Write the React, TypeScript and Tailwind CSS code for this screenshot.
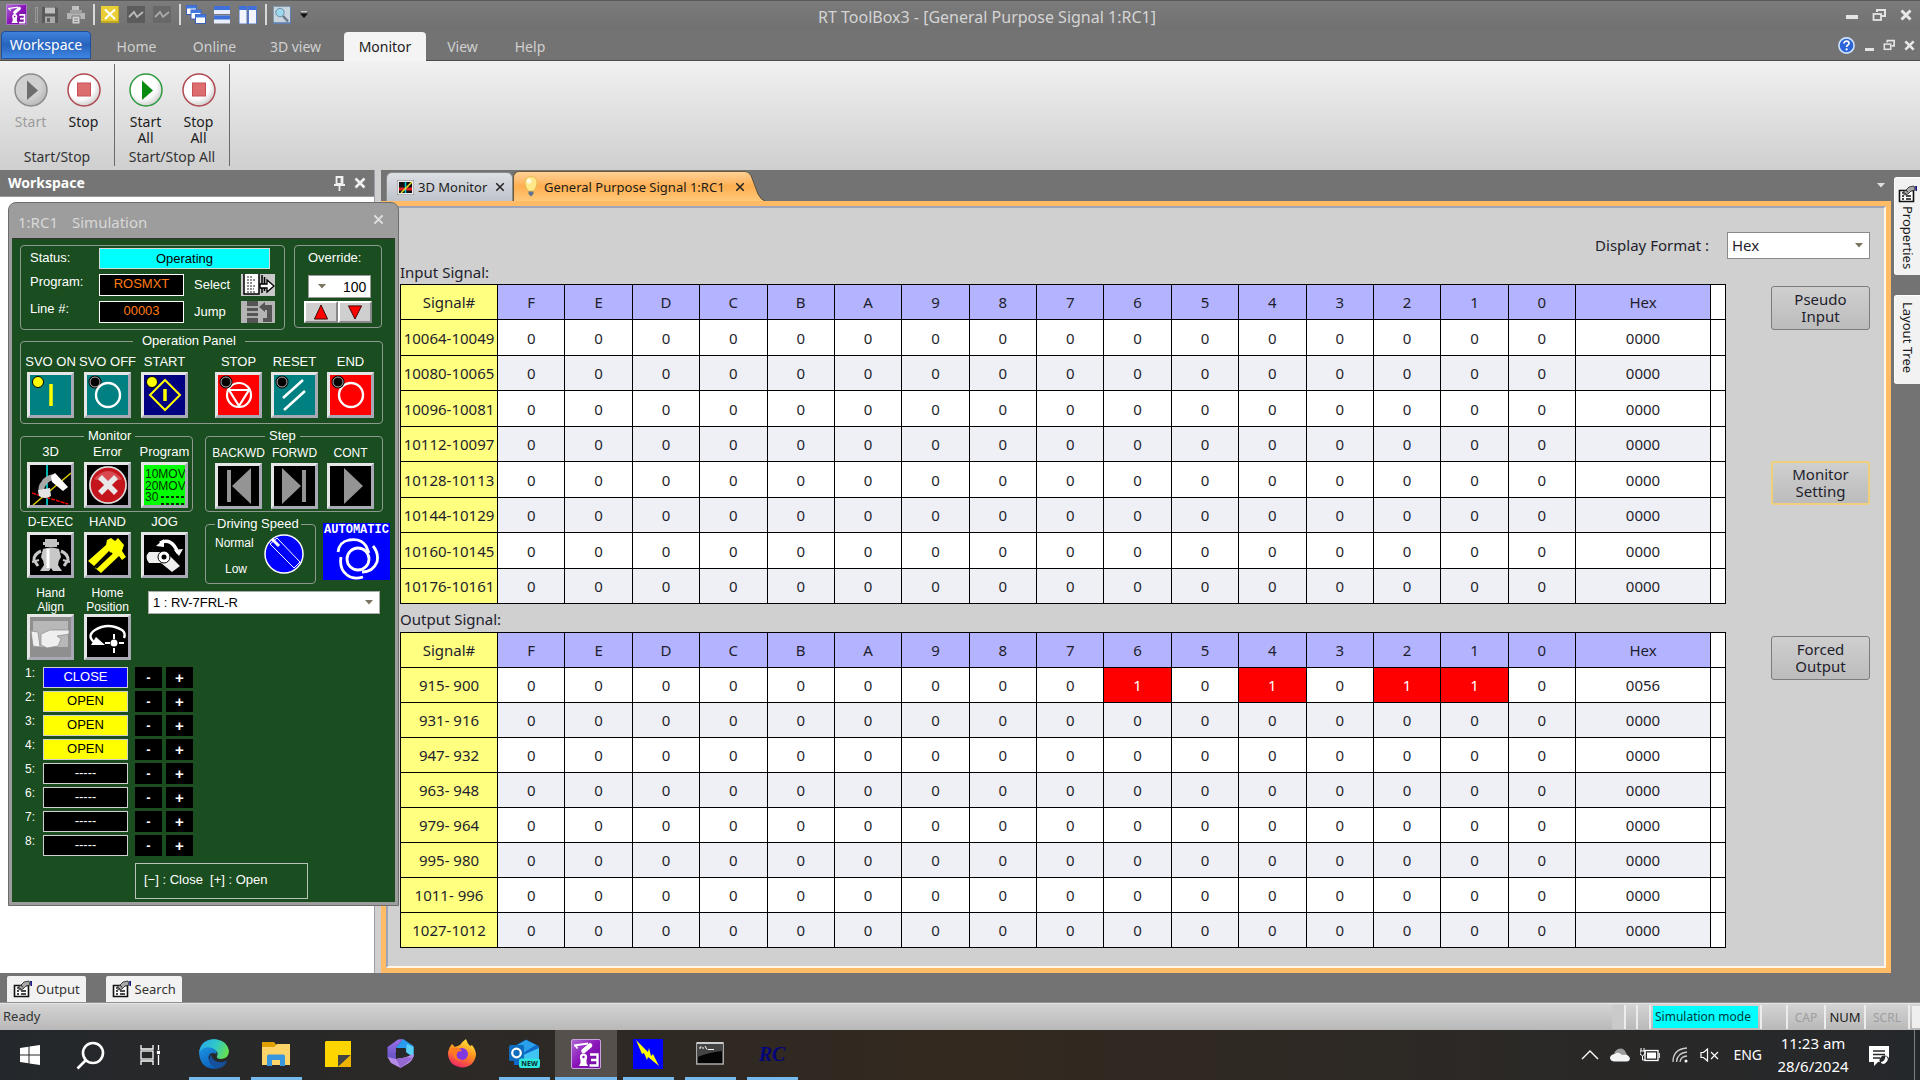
import React from "react";

type Kids = { children?: React.ReactNode };

/* ---------- small glyphs ---------- */

function RobotLogo({ size }: { size: number }) {
  return (
    <svg width={size} height={size} viewBox="0 0 30 30" aria-hidden="true">
      <defs>
        <linearGradient id="rt" x1="0" y1="0" x2="1" y2="1">
          <stop offset="0" stopColor="#b06ad6" />
          <stop offset="0.5" stopColor="#8a14b8" />
          <stop offset="1" stopColor="#6a0a9a" />
        </linearGradient>
      </defs>
      <rect x="0.5" y="0.5" width="29" height="29" rx="1.5" fill="url(#rt)" stroke="#c9a0e0" />
      <path d="M3 6.500 L17 4.500 M4 6 L6.500 9.500" fill="none" stroke="#fff" strokeWidth="1.800" />
      <path d="M12.500 12 L19 6.500" stroke="#fff" strokeWidth="4.600" strokeLinecap="round" />
      <circle cx="12.500" cy="18" r="3.600" fill="#fff" />
      <path d="M9.500 19 H15.500 V24 L17 27 H8 L9.500 24 Z" fill="#fff" />
      <circle cx="12.500" cy="18" r="1.200" fill="#8a14b8" />
      <path d="M19 15.500 H26.500 V26.500 H18.500 M20 21 H26.500" fill="none" stroke="#fff" strokeWidth="2.400" />
    </svg>
  );
}

function CloseX({ size = 12, color = "#e8e8e8", w = 2 }: { size?: number; color?: string; w?: number }) {
  return (
    <svg width={size} height={size} viewBox="0 0 12 12" aria-hidden="true">
      <path d="M1.500 1.500 L10.500 10.500 M10.500 1.500 L1.500 10.500" stroke={color} strokeWidth={w} />
    </svg>
  );
}

function RestoreGlyph({ size = 14 }: { size?: number }) {
  return (
    <svg width={size} height={size} viewBox="0 0 14 14" fill="none" stroke="#e4e4e4" aria-hidden="true">
      <path d="M5 4 V2 H13 V8 H10" strokeWidth="2" />
      <rect x="1.500" y="6" width="7.500" height="6" strokeWidth="1.800" />
    </svg>
  );
}

function PropsIcon() {
  return (
    <svg className="shrink-0" width="20" height="18" viewBox="0 0 20 18" aria-hidden="true">
      <path d="M1.500 5.500 H15.500 V16.500 H1.500 Z" fill="#fff" stroke="#111" strokeWidth="1.600" />
      <path d="M4 11 H6 M8 11 H13 M4 14 H6 M8 14 H13" stroke="#111" strokeWidth="1.500" />
      <path d="M4 8 L8 5 L11 2 L16 1 L17 5 L13 6 L10 9 L7 10 Z" fill="#a8a8a8" stroke="#333" strokeWidth="0.900" />
      <path d="M5 7 L8 9 M8 5 L10 7.500" stroke="#222" />
      <path d="M17 1 H19 V6 H17.500 Z" fill="#1a1a80" />
    </svg>
  );
}

function Caret({ color = "#7a7560" }: { color?: string }) {
  return (
    <svg className="pointer-events-none" width="8" height="5" viewBox="0 0 8 5" aria-hidden="true">
      <path d="M0 0 H8 L4 4.500 Z" fill={color} />
    </svg>
  );
}

/* ---------- title bar ---------- */

function QuickAccess() {
  return (
    <div className="flex items-center w-[310px] pl-[6px] shrink-0">
      <RobotLogo size={21} />
      <div className="ml-2 w-[3px] h-4 border border-[#999]" />
      <button aria-label="Save" className="ml-[3px]">
        <svg width="18" height="18" viewBox="0 0 18 18"><path d="M1 1 H15 L17 3 V17 H1 Z" fill="#5a5a5a" /><rect x="4" y="1.500" width="10" height="6" fill="#bdbdbd" /><rect x="4" y="10.500" width="10" height="6.500" fill="#a8a8a8" /><rect x="6" y="12" width="3" height="4" fill="#606060" /></svg>
      </button>
      <button aria-label="Print" className="ml-[7px]">
        <svg width="20" height="20" viewBox="0 0 20 20"><path d="M6 1 H13 V6 H6 Z" fill="#c0c0c0" /><path d="M1 8 H19 V14 H1 Z" fill="#b4b4b4" /><path d="M4 5 H16 V9 H4 Z" fill="#a0a0a0" /><path d="M6 11 H14 V19 H6 Z" fill="#d0d0d0" stroke="#777" /><path d="M8 14 H12 M8 16.500 H12" stroke="#888" /></svg>
      </button>
      <div className="ml-[7px] w-[2px] h-[21px] bg-[#d8d8d8]" />
      <button aria-label="Disconnect" className="ml-[6px]">
        <svg width="18" height="17" viewBox="0 0 18 17"><rect width="18" height="17" fill="#e9cf35" /><path d="M0 16 H18 V0" fill="none" stroke="#b59c1c" strokeWidth="1.500" /><path d="M4 3.500 L14 13 M14 3.500 L4 13" stroke="#fff" strokeWidth="2" /></svg>
      </button>
      <button aria-label="Trace" className="ml-[8px]">
        <svg width="18" height="17" viewBox="0 0 18 17"><rect width="18" height="17" fill="#5c5c5c" /><path d="M2 11 L7 6 L10 11 L16 6" fill="none" stroke="#bbb" strokeWidth="1.800" /></svg>
      </button>
      <button aria-label="Graph" className="ml-[8px]">
        <svg width="18" height="17" viewBox="0 0 18 17"><rect width="18" height="17" fill="#686868" /><path d="M2 11 L7 6 L10 11 L16 6" fill="none" stroke="#aaa" strokeWidth="1.800" /></svg>
      </button>
      <div className="ml-[8px] w-[2px] h-[21px] bg-[#d8d8d8]" />
      <button aria-label="Cascade" className="ml-[5px]">
        <svg width="20" height="20" viewBox="0 0 20 20">
          {[0, 4.5, 9].map((o) => (
            <g key={o}><rect x={0.5 + o} y={0.5 + o} width="10" height="9" fill="#fff" stroke="#3c62b8" /><rect x={0.5 + o} y={0.5 + o} width="10" height="3" fill="#3f76e0" /></g>
          ))}
        </svg>
      </button>
      <button aria-label="Tile horizontally" className="ml-[8px]">
        <svg width="16" height="18" viewBox="0 0 16 18"><rect width="16" height="8" fill="#e8eefc" /><rect width="16" height="4" fill="#3f6fd8" /><rect y="9.500" width="16" height="8" fill="#e8eefc" /><rect y="9.500" width="16" height="4" fill="#3f6fd8" /></svg>
      </button>
      <button aria-label="Tile vertically" className="ml-[9px]">
        <svg width="18" height="18" viewBox="0 0 18 18"><rect width="8" height="18" fill="#f2f5fd" stroke="#5578c8" /><rect width="8" height="4" fill="#3f6fd8" /><rect x="9.500" width="8" height="18" fill="#f2f5fd" stroke="#5578c8" /><rect x="9.500" width="8" height="4" fill="#3f6fd8" /></svg>
      </button>
      <div className="ml-[8px] w-[2px] h-[21px] bg-[#d8d8d8]" />
      <button aria-label="Find" className="ml-[6px]">
        <svg width="18" height="18" viewBox="0 0 18 18"><rect x="0.500" y="0.500" width="17" height="17" fill="#c8d4de" stroke="#8298ac" /><path d="M0 17 H18 V0" fill="none" stroke="#5a7ab0" strokeWidth="1.500" /><circle cx="7" cy="6.500" r="4.200" fill="#9ed8ec" stroke="#6a8ea8" /><path d="M10 10 L15 15.500" stroke="#6b7a88" strokeWidth="2.600" /></svg>
      </button>
      <button aria-label="Customize toolbar" className="ml-[9px]">
        <svg width="8" height="8" viewBox="0 0 8 8"><path d="M1 0.700 H7" stroke="#ddd" /><path d="M0 2.500 H8 L4 7 Z" fill="#111" /></svg>
      </button>
    </div>
  );
}

function TitleBar() {
  return (
    <header className="flex items-center h-[30px] border-t border-[#5a5a5a] bg-linear-to-b from-[#7b7b7b] to-[#717171] pb-[2px]">
      <QuickAccess />
      <h1 className="flex-1 text-center text-base leading-5 text-[#d4d4d4] whitespace-nowrap pt-1">RT ToolBox3 - [General Purpose Signal 1:RC1]</h1>
      <div className="flex items-center justify-end w-[256px] gap-[14px] pr-2">
        <button aria-label="Minimize" className="pt-1"><div className="w-[12px] h-[4px] bg-[#e4e4e4]" /></button>
        <button aria-label="Restore"><RestoreGlyph /></button>
        <button aria-label="Close"><CloseX w={3} /></button>
      </div>
    </header>
  );
}

function MenuTab({ children, w }: Kids & { w: string }) {
  return <button className={`${w} pt-1 text-[#d0d0d0] text-center`}>{children}</button>;
}

function MenuBar() {
  return (
    <nav className="flex h-[31px] bg-[#737373] border-b border-[#4c4c4c] text-sm leading-5">
      <button className="w-[90px] ml-px mt-px mb-px rounded-t border border-[#1c4fa0] bg-linear-to-b from-[#3f82dc] via-[#2763bd] to-[#3f86e2] text-white">Workspace</button>
      <MenuTab w="w-[91px]">Home</MenuTab>
      <MenuTab w="w-[65px]">Online</MenuTab>
      <MenuTab w="w-[97px]">3D view</MenuTab>
      <button className="w-[82px] mt-[2px] -mb-px pt-px rounded-t bg-[#f4f4f4] text-[#1c1c1c]">Monitor</button>
      <MenuTab w="w-[73px]">View</MenuTab>
      <MenuTab w="w-[62px]">Help</MenuTab>
      <div className="flex flex-1 items-center justify-end gap-[9px] pr-[5px]">
        <button aria-label="Help topics" className="mr-px">
          <svg width="17" height="17" viewBox="0 0 17 17"><circle cx="8.500" cy="8.500" r="7.600" fill="#2a62d8" stroke="#cfe2ff" strokeWidth="1.600" /><path d="M6 6.500 Q6 4.200 8.500 4.200 Q11 4.200 11 6.300 Q11 7.600 9.600 8.300 Q8.600 8.900 8.600 10" fill="none" stroke="#fff" strokeWidth="1.700" /><circle cx="8.600" cy="12.400" r="1.100" fill="#fff" /></svg>
        </button>
        <button aria-label="Minimize document" className="pt-2"><div className="w-[9px] h-[3px] bg-[#e4e4e4]" /></button>
        <button aria-label="Restore document"><RestoreGlyph size={12} /></button>
        <button aria-label="Close document"><CloseX size={11} w={2.8} /></button>
      </div>
    </nav>
  );
}

/* ---------- ribbon ---------- */

function RoundIcon({ kind }: { kind: "off" | "play" | "stop" }) {
  const ring = kind === "off" ? "#8a8a8a" : kind === "play" ? "#2f9a3f" : "#b04850";
  return (
    <svg width="34" height="34" viewBox="0 0 34 34" aria-hidden="true">
      <defs>
        <radialGradient id={"ball" + kind} cx="0.4" cy="0.35" r="0.7">
          <stop offset="0.6" stopColor={kind === "off" ? "#d0d0d0" : "#ffffff"} />
          <stop offset="1" stopColor={kind === "off" ? "#b4b4b4" : "#c8c8c8"} />
        </radialGradient>
      </defs>
      <circle cx="17" cy="17" r="16" fill={`url(#ball${kind})`} stroke={ring} strokeWidth="1.500" />
      {kind === "stop" ? (
        <rect x="10.500" y="10" width="13" height="13" fill="#dc6e70" stroke="#c65056" />
      ) : (
        <path d="M13 7.500 L24 17.500 L13 27 Z" fill={kind === "off" ? "#6e6e6e" : "#0b8a10"} />
      )}
    </svg>
  );
}

function RibbonButton({ kind, lines, muted }: { kind: "off" | "play" | "stop"; lines: string[]; muted?: boolean }) {
  return (
    <button disabled={muted} className="flex flex-col items-center w-[53px]">
      <RoundIcon kind={kind} />
      <span className={`mt-[7px] leading-4 ${muted ? "text-[#9c9c9c]" : "text-[#1c1c1c]"}`}>
        {lines.map((l) => <span key={l} className="block">{l}</span>)}
      </span>
    </button>
  );
}

function RibbonGroup({ label, children }: Kids & { label: string }) {
  return (
    <section className="flex flex-col justify-between w-[115px] mt-[3px] mb-[4px] border-r border-[#6a6a6a] pt-[9px]">
      <div className="flex px-1">{children}</div>
      <h2 className="text-center leading-[18px] text-[#333]">{label}</h2>
    </section>
  );
}

function Ribbon() {
  return (
    <div className="flex h-[109px] bg-linear-to-b from-[#f1f1f1] to-[#cfcfcf] text-sm">
      <RibbonGroup label="Start/Stop">
        <RibbonButton kind="off" lines={["Start"]} muted />
        <RibbonButton kind="stop" lines={["Stop"]} />
      </RibbonGroup>
      <RibbonGroup label="Start/Stop All">
        <RibbonButton kind="play" lines={["Start", "All"]} />
        <RibbonButton kind="stop" lines={["Stop", "All"]} />
      </RibbonGroup>
    </div>
  );
}

/* ---------- simulation window ---------- */

function Led({ on }: { on?: boolean }) {
  return on ? (
    <circle cx="8" cy="7" r="5.500" fill="#ffff00" stroke="#000" />
  ) : (
    <g><circle cx="8" cy="7" r="6.500" fill="#000" /><circle cx="8" cy="7" r="5" fill="#000" stroke="#b0b0b0" /></g>
  );
}

function PanelButton({ label, bg, small, children }: Kids & { label: string | string[]; bg: string; small?: boolean }) {
  const lines = Array.isArray(label) ? label : [label];
  const stacked = lines.length > 1;
  return (
    <label className="flex flex-col items-center w-[47px]">
      <span className={`whitespace-nowrap text-center ${small ? "text-xs" : "text-[13px]"} ${stacked ? "leading-[14px]" : "leading-4"}`}>
        {lines.map((l) => <span key={l} className="block">{l}</span>)}
      </span>
      <button aria-label={lines.join(" ")} className={`${stacked ? "" : "mt-[2px]"} w-[47px] h-[46px] border-[3px] border-t-[#e6e6e6] border-l-[#e6e6e6] border-r-[#a9a9b6] border-b-[#a9a9b6] ${bg}`}>
        <svg width="41" height="40" viewBox="0 0 41 40">{children}</svg>
      </button>
    </label>
  );
}

function Group({ title, className, at, children }: Kids & { title: string; className: string; at: string }) {
  return (
    <fieldset className={`rounded-[4px] border border-[#8f9a8f] min-w-0 ${className}`}>
      <legend className={`text-[13px] leading-[14px] whitespace-nowrap ${at}`}>{title}</legend>
      {children}
    </fieldset>
  );
}

function StatusBlock() {
  return (
    <div className="flex items-start gap-[9px]">
      <div className="w-[265px] h-[85px] rounded-[4px] border border-[#8f9a8f] pl-[9px] pt-[2px] flex flex-col gap-[5px]">
        <div className="flex">
          <span className="w-[69px] leading-[20px]">Status:</span>
          <output className="w-[171px] h-[21px] border border-[#d8d8d8] bg-[#00ffff] text-black text-center leading-[19px]">Operating</output>
        </div>
        <div className="flex">
          <span className="w-[69px] leading-4">Program:</span>
          <output className="w-[85px] h-[22px] border border-white bg-black text-[#ff7a10] text-center leading-[18px]">ROSMXT</output>
          <span className="w-[47px] ml-[10px] leading-[22px]">Select</span>
          <button aria-label="Select program" className="w-[34px] h-[22px] bg-[#c8c8c8]">
            <svg width="34" height="22" viewBox="0 0 34 22"><path d="M3 0 V20 H18 V0" fill="#fff" stroke="#000" strokeWidth="1.500" /><path d="M6 3 H12 M6 6 H15 M6 9 H12 M6 12 H15 M6 15 H13 M6 18 H15" stroke="#222" strokeDasharray="2 1" /><path d="M21 1 V19 M23.500 3 V17" stroke="#000" strokeWidth="1.500" /><path d="M19 10 H26 V6 L33 12 L26 18 V14 H19 Z" fill="#fff" stroke="#000" strokeWidth="1.300" /></svg>
          </button>
        </div>
        <div className="flex">
          <span className="w-[69px] leading-4">Line #:</span>
          <output className="w-[85px] h-[22px] border border-white bg-black text-[#ff7a10] text-center leading-[18px]">00003</output>
          <span className="w-[47px] ml-[10px] leading-[22px]">Jump</span>
          <button aria-label="Jump to line" className="w-[34px] h-[22px] bg-[#b4b4b4]">
            <svg width="34" height="22" viewBox="0 0 34 22"><path d="M6 0 H17 V22 H6 Z" fill="#555" /><path d="M6 6 H17 M6 11 H17 M6 16 H17" stroke="#c8c8c8" strokeWidth="1.500" /><path d="M18 6 L24 1 V4 H31 V21 H22 V17 H26 V9 H24 V11 Z" fill="#555" /></svg>
          </button>
        </div>
      </div>
      <div className="w-[88px] h-[83px] rounded-[4px] border border-[#8f9a8f] px-[9px] pt-1">
        <label htmlFor="override" className="block ml-1 -mr-2 leading-[16px]">Override:</label>
        <div className="mt-[9px] ml-1 flex items-center bg-white border border-[#9a9a9a] h-[23px] w-[63px] pl-[9px]">
          <Caret />
          <select id="override" className="appearance-none flex-1 min-w-0 pl-[17px] text-black text-sm leading-4 outline-none"><option>100</option></select>
        </div>
        <div className="flex mt-[3px] -mr-1">
          {["M16 3 L23 18 H9 Z", "M16 18 L23 4 H9 Z"].map((d, i) => (
            <button key={d} aria-label={i ? "Decrease override" : "Increase override"} className="w-[34px] h-[22px] bg-[#cfcfcf] border-2 border-t-white border-l-white border-r-[#888] border-b-[#888]">
              <svg className="-mt-px" width="30" height="20" viewBox="0 0 32 21"><path d={d} fill="#f00" stroke="#300" /></svg>
            </button>
          ))}
        </div>
      </div>
    </div>
  );
}

const hands = [
  ["CLOSE", "bg-[#0000ff] text-white"],
  ["OPEN", "bg-[#ffff00] text-black"],
  ["OPEN", "bg-[#ffff00] text-black"],
  ["OPEN", "bg-[#ffff00] text-black"],
  ["-----", "bg-black text-white"],
  ["-----", "bg-black text-white"],
  ["-----", "bg-black text-white"],
  ["-----", "bg-black text-white"],
];

function SimulationWindow() {
  return (
    <section className="absolute left-2 top-8 z-10 w-[391px] rounded-t-[8px] border border-[#6c6c6c] bg-[#9d9d9d] px-[3px] pb-[3px] font-['Liberation_Sans',sans-serif] text-[13px] text-white">
      <div className="flex items-start justify-between h-[35px] pl-[6px] pr-[11px] font-['Noto_Sans',sans-serif]">
        <h2 className="flex gap-[14px] pt-[9px] text-[15px] leading-5 text-[#d8d8d8]"><span>1:RC1</span><span>Simulation</span></h2>
        <button aria-label="Close simulation" className="pt-[11px]"><CloseX color="#e0e0e0" size={11} w={2.2} /></button>
      </div>
      <div className="bg-[#1a4d20] border-t border-[#333] pl-2 pt-[6px] pb-[3px]">
        <StatusBlock />
        <Group title="Operation Panel" at="ml-[106px] px-[9px]" className="mt-1 w-[363px] h-[90px] pl-[6px] pr-[8px]">
          <div className="flex justify-between pt-[6px]">
            <div className="flex gap-[10px]">
              <PanelButton label="SVO ON" bg="bg-[#008080]"><Led on /><path d="M21 9 V31" stroke="#ff0" strokeWidth="3.500" /></PanelButton>
              <PanelButton label="SVO OFF" bg="bg-[#008080]"><Led /><circle cx="21" cy="20" r="12" fill="none" stroke="#fff" strokeWidth="2.400" /></PanelButton>
              <PanelButton label="START" bg="bg-[#000080]"><path d="M21 5 L36 20 L21 35 L6 20 Z" fill="none" stroke="#ff0" strokeWidth="2" /><path d="M21 14 V26" stroke="#ff0" strokeWidth="3.500" /><Led on /></PanelButton>
            </div>
            <div className="flex gap-[9px]">
              <PanelButton label="STOP" bg="bg-[#ff0000]"><circle cx="21" cy="20" r="12" fill="none" stroke="#fff" strokeWidth="2.200" /><path d="M11 15 H31 L21 31 Z" fill="none" stroke="#fff" strokeWidth="2.200" /><Led /></PanelButton>
              <PanelButton label="RESET" bg="bg-[#008080]"><Led /><path d="M9 23 L29 5 M10 35 L31 16" stroke="#fff" strokeWidth="2.600" /></PanelButton>
              <PanelButton label="END" bg="bg-[#ff0000]"><circle cx="21" cy="20" r="12" fill="none" stroke="#fff" strokeWidth="2.400" /><Led /></PanelButton>
            </div>
          </div>
        </Group>
        <div className="flex gap-3 mt-[5px]">
          <Group title="Monitor" at="ml-[57px] px-1" className="w-[173px] h-[83px] px-[6px] pt-px">
            <div className="flex gap-[10px]">
              <PanelButton label="3D" bg="bg-black">
                <path d="M17 0 V40" stroke="#00b4b4" strokeWidth="2" /><path d="M2 28 L38 39" stroke="#e00" strokeWidth="1.500" strokeDasharray="4 1" /><path d="M3 40 L41 8" stroke="#d8c800" strokeWidth="1.500" />
                <path d="M12 30 Q10 22 14 18 Q17 13 24 12" fill="none" stroke="#a8a8a8" strokeWidth="6" /><path d="M21 11 L25 8 L38 22 L33 26 L22 17 Z" fill="#fff" /><path d="M8 25 L20 23 L21 31 Q15 35 9 31 Z" fill="#e4e4e4" />
              </PanelButton>
              <PanelButton label="Error" bg="bg-black">
                <circle cx="21" cy="20" r="19" fill="#777" /><circle cx="21" cy="20" r="18" fill="#c4141c" stroke="#ddd" strokeWidth="1.500" /><path d="M7 14 Q21 -2 35 14 Q21 20 7 14 Z" fill="#d84a50" /><path d="M13 12 L29 28 M29 12 L13 28" stroke="#e8e8e8" strokeWidth="5.500" />
              </PanelButton>
              <PanelButton label="Program" bg="bg-[#00ff00]">
                <text x="1" y="13" fontSize="12" fill="#003000">10MOV</text><text x="1" y="25" fontSize="12" fill="#003000">20MOV</text><text x="1" y="36" fontSize="12" fill="#003000">30</text><path d="M17 32 H40 M17 39 H40" stroke="#003000" strokeWidth="2" strokeDasharray="3 2" />
              </PanelButton>
            </div>
          </Group>
          <Group title="Step" at="ml-[50px] px-1" className="w-[178px] h-[83px] pl-[9px] pt-[2px]">
            <div className="flex gap-[9px]">
              <PanelButton small label="BACKWD" bg="bg-black"><path d="M9 4 H13 V36 H9 Z M33 2 V38 L14 20 Z" fill="#949494" /></PanelButton>
              <PanelButton small label="FORWD" bg="bg-black"><path d="M8 2 L27 20 L8 38 Z M28 4 H32 V36 H28 Z" fill="#949494" /></PanelButton>
              <PanelButton small label="CONT" bg="bg-black"><path d="M14 2 L33 20 L14 38 Z" fill="#949494" /></PanelButton>
            </div>
          </Group>
        </div>
        <div className="flex h-[69px] mt-[2px]">
          <div className="flex gap-[10px] pl-[7px] w-[185px]">
            <PanelButton small label="D-EXEC" bg="bg-black">
              <path d="M15 4 H27 V7 H29 V10 H27 V12 H15 V10 H13 V7 H15 Z" fill="#c4c4c4" /><path d="M13 14 Q21 11 29 14 L31 22 Q28 26 28 30 L32 36 H23 L21 33 L19 36 H10 L14 30 Q14 26 11 22 Z" fill="#c8c8c8" /><path d="M11 16 Q4 19 4 25 L8 31 M31 16 Q38 19 38 25 L34 31" fill="none" stroke="#c8c8c8" strokeWidth="3" /><path d="M2 27 L9 25 M40 27 L33 25" stroke="#c8c8c8" strokeWidth="2" /><path d="M18 14 V33" stroke="#fff" strokeWidth="3" />
            </PanelButton>
            <PanelButton label="HAND" bg="bg-black">
              <path d="M20 5 L24 3 L28 6 L31 3 L37 10 L35 16 L39 22 L35 25 L32 21 L14 38 L8 33 L24 18 L22 16 L7 31 L1 26 L19 10 Z" fill="#ff0" /><path d="M9 33 L25 18" stroke="#000" strokeWidth="2" />
            </PanelButton>
            <PanelButton label="JOG" bg="bg-black">
              <path d="M5 17 H22 L36 31 L28 37 L17 28 H5 Q0 22 5 17 Z" fill="#eee" /><circle cx="20" cy="22" r="6" fill="#fff" stroke="#000" /><circle cx="20" cy="22" r="2.500" /><path d="M16 8 Q28 2 34 18" fill="none" stroke="#fff" strokeWidth="3.500" /><path d="M12 11 L20 4 L20 12 Z M30 15 L39 14 L35 21 Z" fill="#fff" />
            </PanelButton>
          </div>
          <Group title="Driving Speed" at="px-[2px]" className="mt-[3px] w-[111px] h-[67px] pl-[9px] pr-[11px]">
            <div className="flex justify-between">
              <div className="flex flex-col text-xs">
                <span className="pt-1 leading-4">Normal</span>
                <span className="pl-[10px] pt-[10px] leading-4">Low</span>
              </div>
              <button aria-label="Driving speed">
                <svg width="40" height="40" viewBox="0 0 40 40"><circle cx="20" cy="20" r="19" fill="#0000ff" stroke="#fff" strokeWidth="1.500" /><path d="M6 10 L13 4 L36 28 L30 34 Z" fill="none" stroke="#fff" /><path d="M8 5 L15 12" stroke="#fff" strokeWidth="3" /></svg>
              </button>
            </div>
          </Group>
          <div className="ml-[7px] mt-[9px] w-[67px] h-[57px] bg-[#0000ff] flex flex-col items-center">
            <span className="font-['Liberation_Mono',monospace] font-bold text-xs leading-[14px]">AUTOMATIC</span>
            <svg width="46" height="43" viewBox="0 0 46 43" fill="none" stroke="#fff" strokeWidth="2.800" aria-label="Automatic mode"><circle cx="24" cy="22" r="11" /><path d="M4 15 Q5 5 15 3 Q27 1 32 9 L35 16" /><path d="M39 9 Q45 16 43 25 Q39 35 28 35" /><path d="M7 20 Q5 32 13 38 Q19 43 29 40" /></svg>
          </div>
        </div>
        <div className="flex mt-[3px]">
          <div className="flex gap-[10px] pl-[7px] w-[128px]">
            <PanelButton small label={["Hand", "Align"]} bg="bg-[#8f8f8f]">
              <path d="M3 4 H38 V30 H3 Z" fill="#b8b8b8" /><path d="M1 14 L8 15 L10 30 L3 29 Z M11 17 L20 13 L39 13 L39 17 L27 19 L31 22 L28 29 L17 31 L11 28 Z" fill="#efefef" stroke="#8a8a8a" strokeWidth="0.700" />
            </PanelButton>
            <PanelButton small label={["Home", "Position"]} bg="bg-black">
              <path d="M8 26 Q-1 19 8 13 Q21 5 35 13 Q39 16 37 21" fill="none" stroke="#fff" strokeWidth="2.400" /><path d="M9 20 L18 28 H4 Z" fill="#fff" /><path d="M18 26 H38 M27 17 V36" stroke="#fff" strokeWidth="2" strokeDasharray="5 2" /><circle cx="27" cy="26" r="3.500" fill="#fff" />
            </PanelButton>
          </div>
          <div className="relative flex items-center mt-[5px] w-[232px] h-[23px] bg-white border border-[#aaa]">
            <select aria-label="Robot" className="appearance-none w-full h-full pl-1 text-black text-[13px] leading-4 outline-none"><option>1 : RV-7FRL-R</option></select>
            <span className="pointer-events-none absolute right-[6px] flex"><Caret /></span>
          </div>
        </div>
        <ol className="mt-[7px] pl-[5px]">
          {hands.map(([state, tone], i) => (
            <li key={i} className="flex h-6 items-start">
              <span className="w-[18px] text-xs leading-3">{i + 1}:</span>
              <output className={`w-[85px] h-[21px] border border-[#d0d0d0] text-center leading-[18px] ${tone}`}>{state}</output>
              <button aria-label={`Close hand ${i + 1}`} className="ml-[7px] w-[27px] h-[21px] bg-black font-bold leading-[21px]">-</button>
              <button aria-label={`Open hand ${i + 1}`} className="ml-1 w-[27px] h-[21px] bg-black font-bold text-[15px] leading-[21px]">+</button>
            </li>
          ))}
        </ol>
        <p className="ml-[115px] mt-1 w-[173px] h-[36px] border border-[#b8c4b8] pl-2 text-[13px] leading-[32px] whitespace-pre">[−] : Close  [+] : Open</p>
      </div>
    </section>
  );
}

/* ---------- signal tables ---------- */

const bits = ["F", "E", "D", "C", "B", "A", "9", "8", "7", "6", "5", "4", "3", "2", "1", "0"];
const inputs = ["10064-10049", "10080-10065", "10096-10081", "10112-10097", "10128-10113", "10144-10129", "10160-10145", "10176-10161"].map((name) => ({ name, value: 0 }));
const outputs = ["915- 900", "931- 916", "947- 932", "963- 948", "979- 964", "995- 980", "1011- 996", "1027-1012"].map((name, i) => ({ name, value: i === 0 ? 0x56 : 0 }));

function SignalTable({ caption, rows, tall }: { caption: string; rows: { name: string; value: number }[]; tall?: boolean }) {
  return (
    <div className="flex-1 min-w-0">
      <table aria-label={caption} className="w-full table-fixed border-collapse text-center leading-5">
        <colgroup>
          <col className="w-[97px]" />
          {bits.map((b) => <col key={b} />)}
          <col className="w-[135px]" />
          <col className="w-[15px]" />
        </colgroup>
        <thead>
          <tr className="h-[35px] bg-[#b3b3ff]">
            <th className="border border-black bg-[#ffff80] font-normal">Signal#</th>
            {bits.map((b) => <th key={b} className="border border-black font-normal">{b}</th>)}
            <th className="border border-black font-normal">Hex</th>
            <td className="border border-black bg-white" />
          </tr>
        </thead>
        <tbody>
          {rows.map((r, i) => (
            <tr key={r.name} className={`${tall && i % 2 === 0 ? "h-[36px]" : "h-[35px]"} ${i % 2 ? "bg-[#eff0f6]" : "bg-white"}`}>
              <th className="border border-black bg-[#ffff80] font-normal whitespace-nowrap">{r.name}</th>
              {bits.map((b, k) => {
                const on = (r.value >> (15 - k)) & 1;
                return <td key={b} className={`border border-black ${on ? "bg-[#ff0000] text-white" : ""}`}>{on}</td>;
              })}
              <td className="border border-black">{r.value.toString(16).toUpperCase().padStart(4, "0")}</td>
              <td className="border border-black bg-white" />
            </tr>
          ))}
        </tbody>
      </table>
    </div>
  );
}

function SideButton({ lines, focus }: { lines: string[]; focus?: boolean }) {
  return (
    <button className={`w-[99px] h-[44px] rounded-[3px] bg-linear-to-b from-[#cfcfcf] to-[#bcbcbc] leading-[17px] pb-px ${focus ? "border-2 border-[#f0cf7a]" : "border border-[#7c7c7c]"}`}>
      {lines.map((l) => <span key={l} className="block">{l}</span>)}
    </button>
  );
}

function Document() {
  return (
    <main className="flex-1 border-[5px] border-[#ffbb66] bg-[#d0d0d0] text-[15px] text-[#1e1e2c]">
      <div className="h-full border-t-2 border-l-2 border-t-[#a0a4b8] border-l-[#a0a4b8] border-r-2 border-b-2 border-r-[#fff6e6] border-b-[#fff6e6] pl-[12px] pr-[14px] pt-6">
        <div className="flex items-center justify-end gap-[18px]">
          <label htmlFor="format">Display Format :</label>
          <div className="relative flex items-center w-[143px] h-[27px] bg-white border border-[#8a8a8a]">
            <select id="format" className="appearance-none w-full h-full pl-1 outline-none"><option>Hex</option></select>
            <span className="pointer-events-none absolute right-[6px] flex"><Caret /></span>
          </div>
        </div>
        <h2 className="mt-[3px] mb-px leading-[21px]">Input Signal:</h2>
        <div className="flex items-start gap-[45px]">
          <SignalTable caption="Input signals" rows={inputs} tall />
          <div className="flex flex-col gap-[131px] pt-[2px]">
            <SideButton lines={["Pseudo", "Input"]} />
            <SideButton lines={["Monitor", "Setting"]} focus />
          </div>
        </div>
        <h2 className="pt-[3px] pb-px leading-6">Output Signal:</h2>
        <div className="flex items-start gap-[45px]">
          <SignalTable caption="Output signals" rows={outputs} />
          <div className="pt-1"><SideButton lines={["Forced", "Output"]} /></div>
        </div>
      </div>
    </main>
  );
}

function DocumentTabs() {
  return (
    <div className="flex items-end h-[31px] bg-[#737373] pl-[5px] text-[13px] leading-5 text-[#1c1c1c]">
      <div className="flex items-center h-[29px] w-[127px] rounded-t-[6px] border border-b-0 border-[#8a8a8a] bg-linear-to-b from-[#dcdfe4] to-[#bfc3cb] pl-[10px]">
        <svg width="17" height="15" viewBox="0 0 17 15" aria-hidden="true"><rect width="17" height="15" rx="1" fill="#eee" stroke="#777" /><rect x="2" y="2" width="13" height="11" fill="#111" /><path d="M2 9 H15" stroke="#e02020" strokeWidth="3" /><path d="M8.500 2 V13" stroke="#00c8d8" strokeWidth="1.500" /><path d="M4 13 L15 2" stroke="#e8e020" strokeWidth="1.400" /></svg>
        <button className="ml-[4px] whitespace-nowrap">3D Monitor</button>
        <button aria-label="Close 3D Monitor" className="ml-auto mr-[7px]"><CloseX size={10} color="#222" w={1.8} /></button>
      </div>
      <div className="flex items-center h-[30px] w-[232px] rounded-tl-[6px] border-l border-t border-[#6a5a40] bg-linear-to-b from-[#ffd096] via-[#ffaf50] to-[#ffc878] pl-[10px]">
        <svg width="14" height="21" viewBox="0 0 14 21" aria-hidden="true"><path d="M7 0.500 Q13 1 13 7 Q13 10 10 15 H4 Q1 10 1 7 Q1 1 7 0.500 Z" fill="#ffe88a" stroke="#d8b040" strokeWidth="0.700" /><circle cx="5" cy="5" r="2.500" fill="#fffbe0" /><path d="M4.500 15.500 H9.500 V18 L7 20.500 L4.500 18 Z" fill="#5f7390" /></svg>
        <button className="ml-[6px] whitespace-nowrap">General Purpose Signal 1:RC1</button>
        <button aria-label="Close General Purpose Signal" className="ml-auto"><CloseX size={10} color="#222" w={1.8} /></button>
      </div>
      <svg width="20" height="30" viewBox="0 0 20 30" aria-hidden="true">
        <defs><linearGradient id="tabEnd" x1="0" y1="0" x2="0" y2="1"><stop offset="0" stopColor="#ffd096" /><stop offset="0.5" stopColor="#ffaf50" /><stop offset="1" stopColor="#ffc878" /></linearGradient></defs>
        <path d="M0 0 Q5 1 7 7 L13 23 Q16 29 20 30 H0 Z" fill="url(#tabEnd)" /><path d="M0 0.500 Q5 1 7 7 L13 23 Q16 29 20 30" fill="none" stroke="#55503f" />
      </svg>
      <button aria-label="Tab list" className="ml-auto mr-[6px] mb-[13px]"><Caret color="#e0e0e0" /></button>
    </div>
  );
}

function SideRail() {
  return (
    <aside className="w-[29px] shrink-0 bg-[#737373] pt-[7px] pl-[3px] flex flex-col gap-5 items-stretch text-[13px] leading-5 text-[#1c1c1c]">
      <button className="flex flex-col items-center gap-[3px] h-[98px] bg-[#f2f2f2] border-t border-l border-white rounded-l-[3px] pt-[7px]">
        <PropsIcon />
        <span className="[writing-mode:vertical-rl]">Properties</span>
      </button>
      <button className="flex flex-col items-center h-[89px] bg-[#f2f2f2] border-t border-l border-white rounded-l-[3px] pt-[6px]">
        <span className="[writing-mode:vertical-rl] whitespace-nowrap">Layout Tree</span>
      </button>
    </aside>
  );
}

function WorkspacePane() {
  return (
    <aside className="flex flex-col w-[375px] shrink-0 border-r border-[#9ca0a8] bg-white">
      <div className="flex items-center h-[27px] bg-[#757575] border-b border-[#9a9a9a] pl-2 pr-[8px] text-white">
        <h2 className="flex-1 text-sm leading-5 font-bold">Workspace</h2>
        <button aria-label="Pin"><svg width="11" height="15" viewBox="0 0 11 15"><path d="M2.500 1 H8.500 V8 H2.500 Z M0 9 H11 M5.500 9 V15" fill="none" stroke="#f0f0f0" strokeWidth="1.800" /><path d="M7.500 1 V8" stroke="#f0f0f0" strokeWidth="1.800" /></svg></button>
        <button aria-label="Close workspace" className="ml-[9px]"><CloseX color="#f0f0f0" w={2.6} /></button>
      </div>
    </aside>
  );
}

/* ---------- bottom bars ---------- */

function DockTabs() {
  return (
    <div className="flex items-end h-[30px] bg-[#737373] pl-[7px] gap-5 text-[13px] leading-5 border-b border-[#909090]">
      {["Output", "Search"].map((t) => (
        <button key={t} className="flex items-center gap-[3px] h-[26px] px-[6px] rounded-t-[2px] bg-[#f2f2f2] text-[#333]">
          <PropsIcon />{t}
        </button>
      ))}
    </div>
  );
}

function StatusBar() {
  return (
    <footer className="flex items-stretch h-[27px] border-t border-[#e4e4e4] bg-linear-to-b from-[#d4d4d4] to-[#b8b8b8] text-xs leading-[25px] text-[#333]">
      <span className="flex-1 pl-[3px] text-[13px]">Ready</span>
      <div className="w-[14px] my-px bg-[#cacaca] border-r-2 border-[#ececec]" />
      <div className="w-[12px] my-px border-r-2 border-[#ececec]" />
      <div className="w-[13px] my-px border-r-2 border-[#ececec]" />
      <span className="mx-[2px] my-[2px] w-[105px] bg-[#00ffff] pl-[2px] leading-[22px] text-[#003a3a]">Simulation mode</span>
      <div className="w-[28px] my-px border-l-2 border-r-2 border-[#ececec]" />
      <span className="w-[38px] my-px border-r-2 border-[#ececec] text-center text-[#9e9e9e]">CAP</span>
      <span className="w-[40px] my-px border-r-2 border-[#ececec] text-center text-[13px] text-[#222]">NUM</span>
      <span className="w-[44px] my-px border-r-2 border-[#ececec] text-center text-[#9e9e9e]">SCRL</span>
      <div className="w-[8px] ml-[2px] my-[2px] bg-[#efefef]" />
    </footer>
  );
}

function Task({ name, open, active, children }: Kids & { name: string; open?: boolean; active?: boolean }) {
  return (
    <button aria-label={name} className={`flex flex-col items-center w-[62px] ${active ? "bg-[#55504b]" : ""}`}>
      <span className="flex flex-1 items-center justify-center">{children}</span>
      <span className={`h-[3px] ${active ? "w-full" : "w-[51px]"} ${open ? "bg-[#76b9ed]" : ""}`} />
    </button>
  );
}

function Taskbar() {
  return (
    <div className="flex h-[50px] bg-linear-to-r from-[#24282c] via-[#33291f] to-[#25282b] text-white">
      <button aria-label="Start" className="flex items-center justify-center w-[60px]">
        <svg width="20" height="20" viewBox="0 0 20 20" fill="#fff"><path d="M0 3 L8.500 1.700 V9.500 H0 Z M9.500 1.500 L20 0 V9.500 H9.500 Z M0 10.500 H8.500 V18.300 L0 17 Z M9.500 10.500 H20 V20 L9.500 18.500 Z" /></svg>
      </button>
      <button aria-label="Search" className="flex items-center justify-center w-[60px]">
        <svg width="29" height="29" viewBox="0 0 29 29" fill="none" stroke="#fff" strokeWidth="2.600"><circle cx="17" cy="12" r="10" /><path d="M10 19 L1.500 27.500" /></svg>
      </button>
      <button aria-label="Task view" className="flex items-center justify-center w-[60px] mr-[3px]">
        <svg width="20" height="20" viewBox="0 0 20 20" fill="none" stroke="#fff" strokeWidth="1.300"><path d="M1 0 V4 H13 V0 M1 20 V16 H13 V20" /><rect x="1" y="6" width="12" height="8" /><path d="M18.500 0 V5 M18.500 10 V20" /><rect x="17.500" y="6.500" width="2" height="2" fill="#fff" /></svg>
      </button>
      <Task name="Edge" open>
        <svg width="30" height="30" viewBox="0 0 30 30">
          <defs>
            <linearGradient id="e1" x1="0" y1="0.2" x2="1" y2="0.5"><stop offset="0" stopColor="#28a8ec" /><stop offset="0.55" stopColor="#30c8c8" /><stop offset="1" stopColor="#66e050" /></linearGradient>
            <linearGradient id="e2" x1="0" y1="0" x2="0.6" y2="1"><stop offset="0" stopColor="#1c94e4" /><stop offset="1" stopColor="#0c62bc" /></linearGradient>
          </defs>
          <path d="M0 14 Q1 1 15 0 Q28 1 30 12 Q30 19 22 20 Q17 20 18 17 Q20 14 16 11 Q8 6 0 14 Z" fill="url(#e1)" />
          <path d="M0 14 Q5 6 13 9 Q18 11 17.500 15 Q10 12 9.500 19 Q10 26 19 29.500 Q2 32 0 14 Z" fill="url(#e2)" />
          <path d="M12 15 Q8 22 14 26 Q20 30 27 24 Q29 22 27 22 Q20 25 15 21 Q12 18 12 15 Z" fill="#15519c" /><path d="M9.500 18 Q10 27 19 29.500 Q24 28.500 27.500 24 Q20 28 14 24 Q10 21 9.500 18 Z" fill="#15519c" />
        </svg>
      </Task>
      <Task name="File Explorer" open>
        <svg width="28" height="24" viewBox="0 0 28 24"><path d="M0 0 H12 L14.500 3 V6 H0 Z" fill="#e0a000" /><path d="M0 5 L12 5 L15 2 H28 V23 H0 Z" fill="#ffd468" /><path d="M5 24 V14 Q5 12.500 7 12.500 H21 Q23 12.500 23 14 V24 H18 V18 H10 V24 Z" fill="#3a96dd" /></svg>
      </Task>
      <Task name="Sticky Notes">
        <svg width="26" height="26" viewBox="0 0 26 26"><path d="M1 0 H26 V26 H0 V1 Z" fill="#ffd500" /><path d="M13 14 H26 L13 26 Z" fill="#444" /><path d="M26 14 V26 H13 Z" fill="#f0b400" /></svg>
      </Task>
      <Task name="Microsoft 365">
        <svg width="27" height="29" viewBox="0 0 27 29">
          <defs><linearGradient id="m1" x1="0" y1="0" x2="0" y2="1"><stop offset="0" stopColor="#9a70e8" /><stop offset="1" stopColor="#5f4fc0" /></linearGradient></defs>
          <path d="M11 0.500 L16 0 L9 9 V20 L4 22 L0.500 18 V8 Z" fill="url(#m1)" /><path d="M16 0 L26.500 7 V18 L20 14 L18.500 9 L9 9 Z" fill="#2a9cf0" /><path d="M20 5 L26.500 8 V18 L19 13 Z" fill="#58d0f8" /><path d="M0.500 18 L9 20 L19 18 L26.500 15 Q27 20 22 24 L13.500 29 L4 24 Z" fill="#b48ce8" /><path d="M9 20 L18 18 L26 19 L13.500 29 Z" fill="#9468d0" /><path d="M10 9 H17 L19 14 L16 19 H10 L8.500 15 Z" fill="#28282a" />
        </svg>
      </Task>
      <Task name="Firefox">
        <svg width="28" height="29" viewBox="0 0 28 29">
          <defs><linearGradient id="ff" x1="0.7" y1="0" x2="0.3" y2="1"><stop offset="0" stopColor="#ffe838" /><stop offset="0.5" stopColor="#ff8a20" /><stop offset="1" stopColor="#f02068" /></linearGradient></defs>
          <path d="M4 5 L7 8 L12 6 Q15 2 18 0 Q19 4 22 7 L24 6 Q28 11 28 16 Q26 28 14 28.500 Q1 27 0 15 Q0 10 4 5 Z" fill="url(#ff)" /><circle cx="14" cy="15" r="6" fill="#8038e0" /><path d="M4 9 Q11 8 14 12 Q10 12 9 14 Q7 20 14 21 Q4 23 4 9 Z" fill="#ff7a20" />
        </svg>
      </Task>
      <Task name="Outlook" open>
        <svg width="31" height="29" viewBox="0 0 31 29"><path d="M5 7 L17 0.500 L30 7 V26 H5 Z" fill="#1068c8" /><path d="M5 8 L17 1 L27 6 L14 14 Z" fill="#2ba0ea" /><path d="M12 17 L30 9 V26 H12 Z" fill="#40c4f4" /><rect x="0" y="6" width="15" height="16" rx="1.500" fill="#0f6cbd" /><circle cx="7.500" cy="14" r="4.300" fill="none" stroke="#fff" strokeWidth="2.200" /><rect x="10" y="19.500" width="21" height="9.500" rx="2" fill="#2ee6dc" /><text x="20.500" y="27" textAnchor="middle" fontSize="7" fontWeight="700" fill="#062a30">NEW</text></svg>
      </Task>
      <Task name="RT ToolBox3" open active><RobotLogo size={30} /></Task>
      <Task name="Communication server" open>
        <svg width="30" height="30" viewBox="0 0 30 30"><rect width="30" height="30" fill="#0000ff" /><path d="M3 1 L15 13 L16 9 L18 17 L20 15 L26 27 L15 18 L14 21 L11 14 L9 15 Z" fill="#ff0" /></svg>
      </Task>
      <Task name="Command Prompt" open>
        <svg width="28" height="24" viewBox="0 0 28 24"><rect x="0.750" y="1" width="26.500" height="21" fill="#050505" stroke="#a8a8a8" strokeWidth="1.500" /><path d="M1.500 2 H26.500 V9 Q14 10 1.500 15 Z" fill="#444" /><path d="M4 5 V7 M4 5 H5.500 M7 5 V7 M9 4 L11 7.500 M12 7.500 H18" stroke="#fff" /><path d="M1 1 H27" stroke="#ccc" strokeWidth="2" /></svg>
      </Task>
      <Task name="RC" open><span className="font-['Liberation_Serif',serif] italic font-bold text-xl text-[#05057a]">RC</span></Task>

      <div className="flex items-center ml-auto pr-[5px] text-[15px]">
        <button aria-label="Show hidden icons"><svg width="18" height="10" viewBox="0 0 18 10" fill="none" stroke="#fff" strokeWidth="1.400"><path d="M1 9 L9 1 L17 9" /></svg></button>
        <svg className="ml-[11px]" width="20" height="14" viewBox="0 0 20 14" role="img" aria-label="OneDrive"><path d="M4 9 Q3 4 8 1 Q14 -1 16 5 L18 8 Z" fill="#9c9c9c" /><path d="M4 13.500 Q0 13 0 9.500 Q1 6 5 6 Q8 3 12 7 Q19 6 20 11 Q19 13.500 17 13.500 Z" fill="#f4f4f4" /></svg>
        <svg className="ml-[10px]" width="20" height="14" viewBox="0 0 20 14" role="img" aria-label="Battery"><rect x="5" y="2.500" width="13" height="10" fill="none" stroke="#fff" strokeWidth="1.300" /><rect x="7" y="4.500" width="9" height="6" fill="#fff" /><path d="M19.300 5 V10" stroke="#fff" /><path d="M1 0 V3 M4 0 V3 M0 3 H5 V6 L2.500 8 L0 6 Z M2.500 8 V12 H5" fill="none" stroke="#fff" /></svg>
        <svg className="ml-[12px]" width="17" height="16" viewBox="0 0 17 16" fill="none" stroke="#ccc" strokeWidth="1.300" role="img" aria-label="Wi-Fi"><path d="M1 15 Q1 2 15 1 M4.500 15 Q5 6 15 5 M8 15 Q8.500 9.500 15 9" /><circle cx="14" cy="14" r="1.500" fill="#fff" stroke="none" /></svg>
        <svg className="ml-[11px]" width="19" height="14" viewBox="0 0 19 14" fill="none" stroke="#fff" strokeWidth="1.200" role="img" aria-label="Muted"><path d="M1 4.500 H3.500 L7.500 1 V13 L3.500 9.500 H1 Z" /><path d="M11 4 L18 11 M18 4 L11 11" /></svg>
        <span className="ml-[14px] text-sm">ENG</span>
        <div className="w-[102px] text-center leading-[23px] pb-px"><div>11:23 am</div><div>28/6/2024</div></div>
        <button aria-label="Notifications" className="ml-[5px]"><svg width="21" height="21" viewBox="0 0 21 21"><path d="M0 1 H20 V17 H9 L5 21 V17 H0 Z" fill="#fff" /><path d="M4 6 H16 M4 9.500 H16 M4 13 H11" stroke="#26282a" strokeWidth="1.300" /><circle cx="15.500" cy="15.500" r="5" fill="#26282a" /><path d="M17 11.500 Q20 15 16 18 Q14 19 12 17.500 Q16 17 17 11.500 Z" fill="#fff" stroke="#fff" /></svg></button>
        <div className="ml-[24px] w-px h-[50px] bg-[#808080]" />
      </div>
    </div>
  );
}

export default function App() {
  return (
    <div className="flex flex-col min-h-screen bg-[#cfcfcf] font-['Noto_Sans',sans-serif]">
      <TitleBar />
      <MenuBar />
      <Ribbon />
      <div className="relative flex flex-1">
        <WorkspacePane />
        <SimulationWindow />
        <div className="flex flex-col flex-1 min-w-0 ml-[6px]">
          <DocumentTabs />
          <Document />
        </div>
        <SideRail />
      </div>
      <DockTabs />
      <StatusBar />
      <Taskbar />
    </div>
  );
}
